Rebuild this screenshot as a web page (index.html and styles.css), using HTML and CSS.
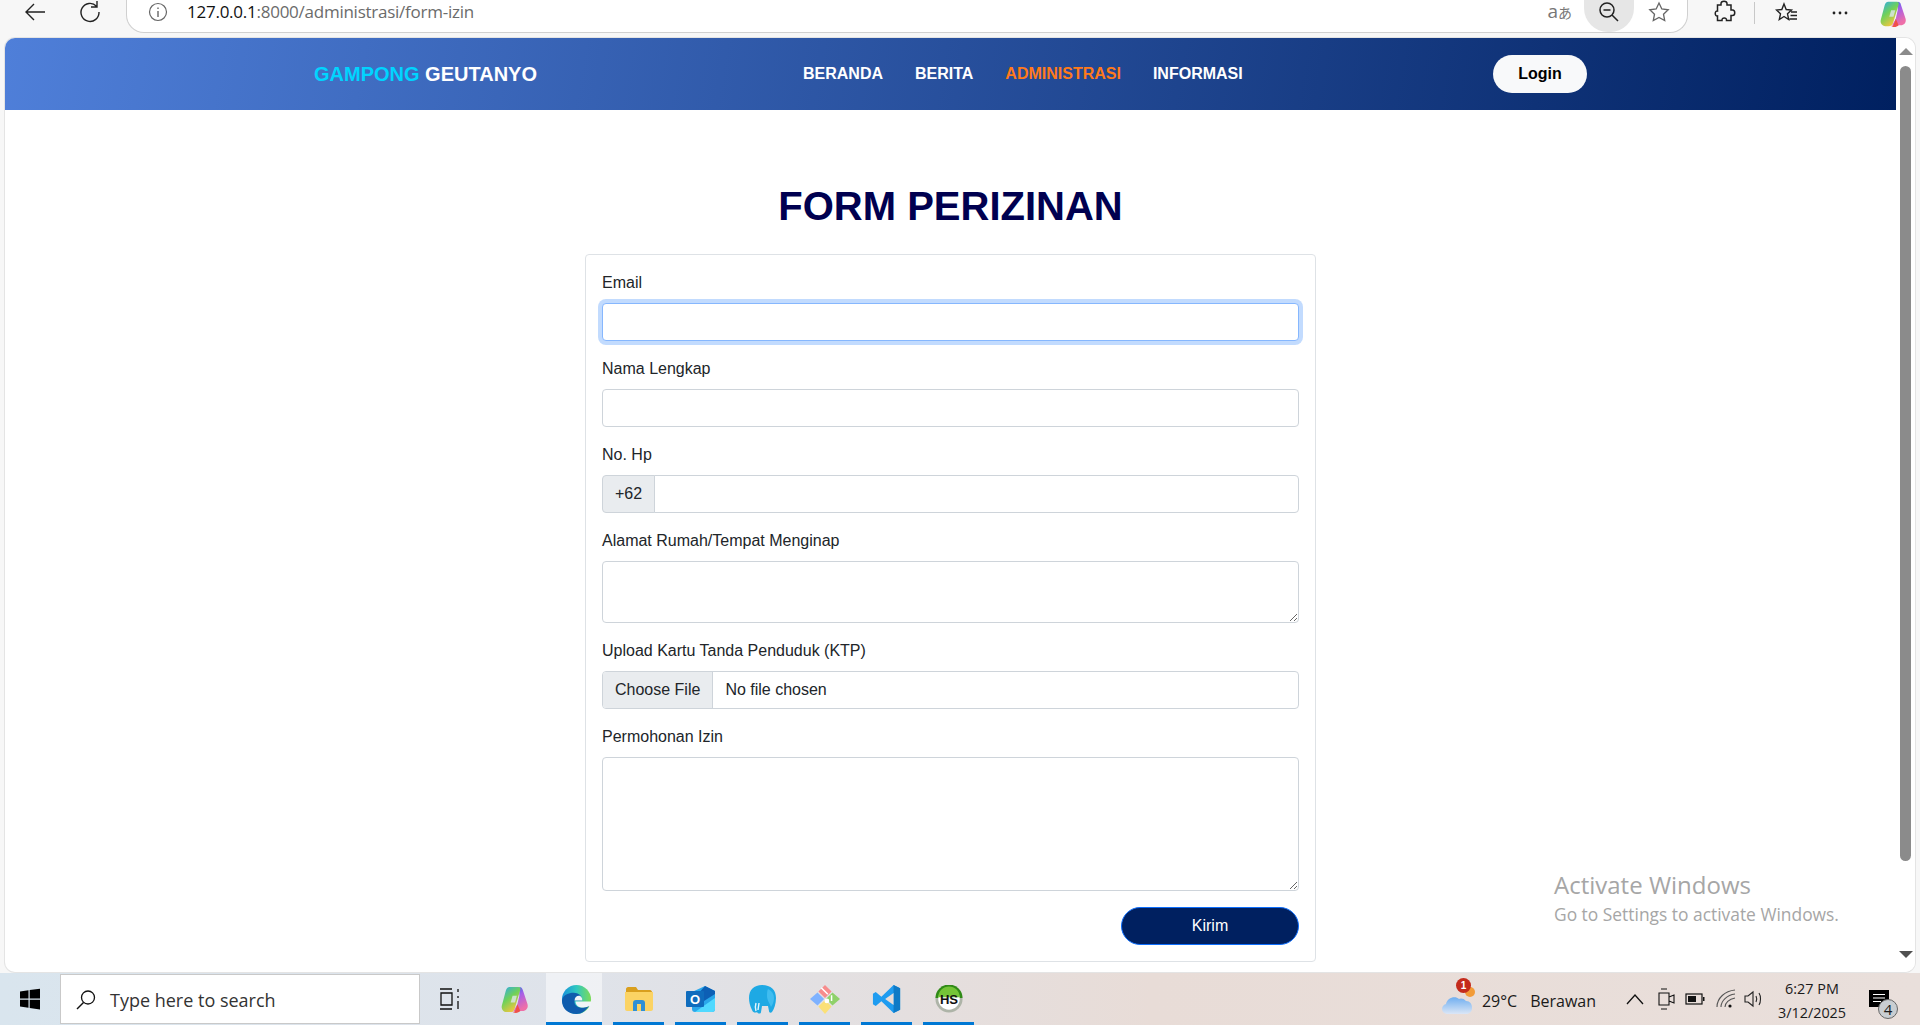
FILE: index.html
```html
<!DOCTYPE html>
<html lang="id">
<head>
<meta charset="utf-8">
<title>Form Perizinan</title>
<link rel="stylesheet" href="styles.css">
</head>
<body>
<svg class="defs" width="0" height="0" aria-hidden="true">
  <defs>
    <linearGradient id="cpa" x1="0" y1="0" x2=".6" y2="1"><stop offset="0" stop-color="#2aa8f0"/><stop offset=".5" stop-color="#6fd15a"/><stop offset="1" stop-color="#f7c63c"/></linearGradient>
    <linearGradient id="cpb" x1="0" y1="0" x2=".4" y2="1"><stop offset="0" stop-color="#2f6fe8"/><stop offset=".45" stop-color="#a85fe6"/><stop offset="1" stop-color="#ee6fa8"/></linearGradient>
    <symbol id="copilot-mark" viewBox="0 0 30 30">
      <path d="M20 2c2 0 3 1 3.500 3L28.500 20c1 4-1.500 7-5.500 7H14l4-7 2-9z" fill="url(#cpb)"/>
      <path d="M10 2h9c2 0 2.500 1.500 2 3L15 25c-.800 2-2.500 3-4.500 3H7c-4 0-6-3.500-5-7L6 6c.600-2.500 2-4 4-4z" fill="url(#cpa)"/>
      <path d="M12 27c1.500 1 3 1 4-1l2-6 3 7c-2 2-6 3-9 0z" fill="#f0504a"/>
      <path d="M13 11h4.500l-2 7H11z" fill="#dfeaf5" opacity=".75"/>
    </symbol>
  </defs>
</svg>
<div class="desktop">
  <header class="toolbar">
    <svg class="tb-back" width="24" height="24" viewBox="0 0 24 24"><path d="M22 12H3M11 4l-8 8 8 8" fill="none" stroke="#222" stroke-width="1.4"/></svg>
    <svg class="tb-reload" width="24" height="24" viewBox="0 0 24 24"><path d="M18.500 6.200A9 9 0 1 0 21 12M19 1v6h-6" fill="none" stroke="#222" stroke-width="1.4"/></svg>
    <div class="address">
      <svg width="20" height="20" viewBox="0 0 20 20"><circle cx="10" cy="10" r="8.500" fill="none" stroke="#666" stroke-width="1.200"/><path d="M10 9v6M10 5.500v1.600" stroke="#666" stroke-width="1.400"/></svg>
      <span class="url"><b>127.0.0.1</b>:8000/administrasi/form-izin</span>
      <span class="translate">a<span class="cjk">あ</span></span>
      <span class="zoom-btn"><svg width="22" height="22" viewBox="0 0 22 22"><circle cx="9" cy="9" r="7" fill="none" stroke="#222" stroke-width="1.500"/><path d="M5.500 9h7M14 14l6 6" stroke="#222" stroke-width="1.500"/></svg></span>
      <svg class="star" width="22" height="22" viewBox="0 0 22 22"><path d="M11 2l2.800 6 6.400.8-4.700 4.400 1.200 6.400-5.700-3.200-5.700 3.200 1.200-6.400L1.800 8.800l6.400-.8z" fill="none" stroke="#666" stroke-width="1.300"/></svg>
    </div>
    <svg class="ext" width="24" height="24" viewBox="0 0 24 24"><path d="M9 3.500c0-3 6-3 6 0v1.500h4v5h1.500c3 0 3 5.500 0 5.500H19v5h-4.500c.5-3.500-5-3.500-4.500 0H5.500v-4.500c-3 .5-3-5.500 0-5V5H9z" fill="none" stroke="#222" stroke-width="1.500"/></svg>
    <span class="tb-sep"></span>
    <svg class="fav" width="24" height="24" viewBox="0 0 24 24"><path d="M9 3l2.200 5.500 5.300.5-4 3.800 1.200 5.700L9 15.500 4.300 18.500l1.200-5.700-4-3.800 5.300-.5zM16 11h6M15.500 14.500h6.500M14.500 18h7.500" fill="none" stroke="#222" stroke-width="1.400"/></svg>
    <svg class="dots" width="16" height="4" viewBox="0 0 16 4"><circle cx="2" cy="2" r="1.400" fill="#222"/><circle cx="8" cy="2" r="1.400" fill="#222"/><circle cx="14" cy="2" r="1.400" fill="#222"/></svg>
    <svg class="copilot" width="28" height="28"><use href="#copilot-mark"/></svg>
  </header>

  <div class="viewport">
    <main class="page">
      <nav class="navbar">
        <div class="nav-inner">
          <a class="brand"><span class="brand-accent">GAMPONG</span> GEUTANYO</a>
          <ul class="nav-links">
            <li><a>BERANDA</a></li>
            <li><a>BERITA</a></li>
            <li><a class="active">ADMINISTRASI</a></li>
            <li><a>INFORMASI</a></li>
          </ul>
          <button class="login" type="button">Login</button>
        </div>
      </nav>
      <section class="content">
        <h1 class="title">FORM PERIZINAN</h1>
        <form class="card">
          <div class="field">
            <label class="label">Email</label>
            <input class="control is-focus" type="email">
          </div>
          <div class="field">
            <label class="label">Nama Lengkap</label>
            <input class="control" type="text">
          </div>
          <div class="field">
            <label class="label">No. Hp</label>
            <div class="group">
              <span class="group-text">+62</span>
              <input class="control group-input" type="text">
            </div>
          </div>
          <div class="field">
            <label class="label">Alamat Rumah/Tempat Menginap</label>
            <textarea class="control area-sm"></textarea>
          </div>
          <div class="field">
            <label class="label">Upload Kartu Tanda Penduduk (KTP)</label>
            <input class="control file" type="file">
          </div>
          <div class="field">
            <label class="label">Permohonan Izin</label>
            <textarea class="control area-lg"></textarea>
          </div>
          <div class="actions"><button class="submit" type="button">Kirim</button></div>
        </form>
      </section>
    </main>
    <aside class="scrollbar">
      <span class="arrow-up"></span>
      <span class="thumb"></span>
      <span class="arrow-down"></span>
    </aside>
    <div class="watermark">
      <div class="wm-title">Activate Windows</div>
      <div class="wm-sub">Go to Settings to activate Windows.</div>
    </div>
  </div>

  <footer class="taskbar">
    <span class="start"><svg width="22" height="22" viewBox="0 0 22 22"><path d="M1 3.500l8.500-1.200v8.200H1zM10.700 2.100L21 .7v9.800H10.700zM1 11.700h8.500v8.100L1 18.600zM10.700 11.700H21v9.700l-10.300-1.400z" fill="#000"/></svg></span>
    <div class="search">
      <svg width="22" height="22" viewBox="0 0 22 22"><circle cx="13" cy="8.500" r="6.500" fill="none" stroke="#111" stroke-width="1.300"/><path d="M8.500 13.500L2 20" stroke="#111" stroke-width="1.500"/></svg>
      <span>Type here to search</span>
    </div>
    <span class="task-icon taskview"><svg width="22" height="24" viewBox="0 0 22 24"><path d="M1 2h12M1 22h12M2 6h11v12H2zM19 2v3M19 9v2M19 14v8" fill="none" stroke="#111" stroke-width="1.300"/></svg></span>
    <span class="task-icon"><svg width="29" height="29"><use href="#copilot-mark"/></svg></span>
    <span class="task-icon is-active is-current"><svg width="31" height="31" viewBox="0 0 32 32"><defs><linearGradient id="ega" x1="0" y1=".5" x2="1" y2=".5"><stop offset="0" stop-color="#1790dc"/><stop offset=".5" stop-color="#2fc8c0"/><stop offset="1" stop-color="#7ddb58"/></linearGradient></defs><circle cx="16" cy="16" r="15" fill="url(#ega)"/><path d="M15 18h16v4c-2 1.500-5 2.500-8 2.500-5 0-8-3-8-6.500z" fill="#f0f4f8"/><path d="M1 17C2 11 8 9 13 9c5 0 9 3 9 8H14c-1 5 4 8 9 7.500 2 0 4-.5 6-2-3 5-8 8.500-13 8.500C7 31 1 25 1 17z" fill="#0f5cad"/><path d="M14 17c0-3 2-5 4.500-5s3.500 2.500 3.500 5z" fill="#f0f4f8"/></svg></span>
    <span class="task-icon is-active"><svg width="28" height="24" viewBox="0 0 28 24"><path d="M1 2c0-1 1-2 2-2h8l2 3h12c1 0 2 1 2 2v3H1z" fill="#d99f1e"/><path d="M0 5h28v17c0 1-1 2-2 2H2c-1 0-2-1-2-2z" fill="#fbd364"/><path d="M8 24v-8c0-2 1-3 3-3h6c2 0 3 1 3 3v8h-4v-7h-4v7z" fill="#2e90d6"/></svg></span>
    <span class="task-icon is-active"><svg width="30" height="27" viewBox="0 0 30 27"><path d="M6 6l13-6 10 5v18c0 2-1 3-3 3H9c-2 0-3-1-3-3z" fill="#2aa7ea"/><path d="M19 0l10 5v3l-11 7-7-6z" fill="#0d5fb5"/><path d="M9 26l20-14v11c0 2-1 3-3 3z" fill="#50d9ff"/><rect x="0" y="5" width="18" height="16" rx="1" fill="#0f6cbd"/><text class="ol-text" x="9" y="18" text-anchor="middle">O</text></svg></span>
    <span class="task-icon is-active"><svg width="29" height="30" viewBox="0 0 29 30"><path d="M14 1c9 0 14 5 14 13 0 6-2 11-4 14-1 1-3 1-3-1l-1-5h-6l-1 6c0 2-3 2-4 0-1 1-4 1-5-2-2-4-3-8-3-12C1 6 6 1 14 1z" fill="#1ea9e4"/><path d="M20 5c4 2 6 5 6 9 0 3-1 6-3 9-1-3-4-7-4-11 0-3 0-5 1-7z" fill="#40bdf0"/><path d="M8 19c-1 3-1 5 0 8M11 19l-1 7" stroke="#e4f5fc" stroke-width="1.400" fill="none"/></svg></span>
    <span class="task-icon is-active"><svg width="30" height="30" viewBox="0 0 32 32"><path d="M16 1l7 7-7 7-7-7z" fill="#f78c8c"/><path d="M8 9l7 7-7 7-8-7z" fill="#7fb2ff"/><path d="M24 9l8 7-8 7-7-7z" fill="#8fd16a"/><path d="M16 17l7 7-7 8-7-8z" fill="#fbe077"/><path d="M12 4l7 7M23 12v6" stroke="#fff" stroke-width="1.600"/><circle cx="18" cy="18" r="2.600" fill="#fff"/></svg></span>
    <span class="task-icon is-active"><svg width="30" height="30" viewBox="0 0 30 32"><path d="M22 1l7 3.500v23L22 31 9 18.500 3 23.500l-3-2V10.500l3-2 6 5z" fill="#1f9cf0"/><path d="M22 1l7 3.500v23L22 31z" fill="#0f7ac6"/><path d="M22 9.500L13 16l9 6.500z" fill="#e8dcd8"/></svg></span>
    <span class="task-icon is-active"><svg width="28" height="28" viewBox="0 0 30 30"><circle cx="15" cy="15" r="14.500" fill="#aeb4a8"/><path d="M.5 14a14.500 14.500 0 0 1 29 0z" fill="#2f8a16"/><circle cx="15" cy="15" r="11.500" fill="#fff"/><path d="M3.500 13a11.500 11.500 0 0 1 23 0z" fill="#74c437"/><text class="hs-text" x="15" y="20" text-anchor="middle">HS</text></svg></span>

    <div class="tray">
      <span class="weather-icon"><svg width="32" height="22" viewBox="0 0 32 22"><defs><linearGradient id="cl" x1="0" y1="0" x2="0" y2="1"><stop offset="0" stop-color="#6faef0"/><stop offset="1" stop-color="#dbe6f6"/></linearGradient></defs><path d="M7 21c-7 0-8-8-2-10 1-6 9-9 13-5 1-1 5-1 7 2 4 0 6 3 6 7 0 4-3 6-6 6z" fill="url(#cl)"/></svg><span class="w-sun"></span><span class="w-badge">1</span></span>
      <span class="temp">29°C</span>
      <span class="cond">Berawan</span>
      <svg class="t-up" width="18" height="12" viewBox="0 0 18 12"><path d="M1 11l8-9 8 9" fill="none" stroke="#111" stroke-width="1.300"/></svg>
      <svg class="t-cam" width="18" height="24" viewBox="0 0 18 24"><path d="M2 6h10v12H2zM12 10l5-2v8l-5-2M4 2h6M4 22h6" fill="none" stroke="#111" stroke-width="1.100"/></svg>
      <svg class="t-bat" width="20" height="14" viewBox="0 0 20 14"><rect x="1" y="2" width="16" height="10" fill="none" stroke="#111" stroke-width="1.200"/><rect x="3" y="4" width="8" height="6" fill="#111"/><rect x="18" y="5" width="1.500" height="4" fill="#111"/></svg>
      <svg class="t-wifi" width="20" height="20" viewBox="0 0 20 20"><path d="M1 18C1 9 9 2 19 1M5 18c0-6 6-12 14-13M9 18c0-4 4-8 10-9" fill="none" stroke="#555" stroke-width="1.100"/><circle cx="14" cy="17" r="1.600" fill="#111"/></svg>
      <svg class="t-vol" width="20" height="20" viewBox="0 0 20 20"><path d="M1 7h3l5-4v14l-5-4H1zM12 7c1 2 1 4 0 6M15 4c2 3 2 9 0 12" fill="none" stroke="#222" stroke-width="1.100"/></svg>
      <div class="clock"><span>6:27 PM</span><span>3/12/2025</span></div>
      <span class="notif"><svg width="20" height="17" viewBox="0 0 20 17"><path d="M0 0h20v17H0z" fill="#000"/><path d="M4 4.500h12M4 8h12M4 11.500h8" stroke="#fff" stroke-width="1.200"/></svg><span class="n-badge">4</span></span>
    </div>
  </footer>
</div>
</body>
</html>
```
FILE: styles.css
```css
* { box-sizing: border-box; }
html, body { margin: 0; height: 100%; overflow: hidden; }
body { font-family: "Liberation Sans", Arial, sans-serif; font-size: 16px; color: #212529; }
.defs { position: absolute; }

.desktop { width: 1920px; height: 1025px; display: flex; flex-direction: column; background: #f7f7f7; }

/* Browser chrome */
.toolbar { height: 38px; flex: none; display: flex; align-items: center; background: #f7f7f7; }
.tb-back { margin-left: 23px; margin-top: -14px; }
.tb-reload { margin-left: 31px; margin-top: -14px; }
.address { width: 1562px; height: 33px; margin-left: 24px; margin-top: -6px; padding: 0 0 8px 21px; background: #fff; border: 1px solid #d0d0d0; border-top: 0; border-radius: 0 0 18px 18px; display: flex; align-items: center; font-family: "Open Sans", sans-serif; }
.url { margin-left: 19px; font-size: 17px; letter-spacing: -.25px; color: #6b6b6b; flex: 1; }
.url b { font-weight: 400; color: #111; }
.translate { font-size: 19px; color: #777; margin-right: 12px; line-height: 19px; }
.cjk { font-family: "Noto Sans CJK JP", sans-serif; font-size: 14px; line-height: 14px; }
.zoom-btn { align-self: flex-start; width: 50px; height: 32px; margin-bottom: -8px; padding-bottom: 8px; background: #e6e6e6; border-radius: 0 0 24px 24px; display: flex; align-items: center; justify-content: center; }
.star { margin-left: 14px; margin-right: 17px; }
.ext { margin-left: 24px; margin-top: -14px; }
.tb-sep { width: 1px; height: 22px; margin-left: 18px; margin-top: -12px; background: #c8c8c8; }
.fav { margin-left: 20px; margin-top: -12px; }
.dots { margin-left: 33px; margin-top: -13px; }
.copilot { margin-left: 31px; margin-top: -10px; flex: none; }

/* Viewport */
.viewport { position: relative; height: 934px; margin: 0 5px; flex: none; display: flex; background: #fff; border-radius: 10px; overflow: hidden; box-shadow: 0 0 0 1px #e4e4e4; }
.page { flex: 1; min-width: 0; }
.scrollbar { width: 19px; flex: none; background: #fff; display: flex; flex-direction: column; align-items: center; padding-top: 10px; }
.arrow-up { width: 0; height: 0; border: 7px solid transparent; border-top: 0; border-bottom: 7px solid #8b8b8b; }
.thumb { width: 11px; height: 795px; margin-top: 11px; background: #8b8b8b; border-radius: 6px; }
.arrow-down { width: 0; height: 0; margin-top: 90px; border: 7px solid transparent; border-bottom: 0; border-top: 7px solid #505050; }

/* Navbar */
.navbar { height: 72px; background: linear-gradient(100deg, #4f7fd9 0%, #002060 100%); }
.nav-inner { width: 1273px; height: 100%; margin: 0 auto; display: flex; align-items: center; }
.brand { font-size: 20px; font-weight: 700; color: #fff; white-space: nowrap; }
.brand-accent { color: #00d4ff; }
.nav-links { list-style: none; margin: 0 0 0 258px; padding: 0; display: flex; gap: 16px; }
.nav-links a { display: block; padding: 8px; font-weight: 700; color: #fff; }
.nav-links a.active { color: #ff7a1a; }
.login { width: 94px; height: 38px; margin-left: auto; border: 0; border-radius: 19px; background: #f8f9fa; font: 700 16px "Liberation Sans", sans-serif; color: #000; }

/* Form */
.content { width: 731px; margin: 0 auto; padding-top: 72px; }
.title { margin: 0 0 24px; font-size: 40px; line-height: 48px; font-weight: 700; text-align: center; color: #000050; }
.card { border: 1px solid #dee2e6; border-radius: 4px; padding: 16px; background: #fff; }
.field { margin-bottom: 16px; }
.label { display: block; margin-bottom: 8px; line-height: 24px; }
.control { display: block; width: 100%; height: 38px; padding: 6px 12px; font: 16px/24px "Liberation Sans", sans-serif; color: #212529; background: #fff; border: 1px solid #ced4da; border-radius: 4px; outline: 0; }
.is-focus { border-color: #86b7fe; box-shadow: 0 0 0 4px rgba(13, 110, 253, .25); }
.group { display: flex; }
.group-text { width: 53px; height: 38px; padding: 6px 12px; line-height: 24px; background: #e9ecef; border: 1px solid #ced4da; border-radius: 4px 0 0 4px; text-align: center; }
.group-input { flex: 1; width: auto; margin-left: -1px; border-radius: 0 4px 4px 0; }
.area-sm { height: 62px; }
.area-lg { height: 134px; }
.file::file-selector-button { height: 36px; margin: -6px 12px -6px -12px; padding: 6px 12px; font: 16px "Liberation Sans", sans-serif; color: #212529; background: #e9ecef; border: 0; border-right: 1px solid #ced4da; border-radius: 0; }
.actions { display: flex; justify-content: flex-end; }
.submit { width: 178px; height: 38px; border: 1px solid #0d6efd; border-radius: 19px; background: #002060; color: #fff; font: 16px "Liberation Sans", sans-serif; }

/* Watermark */
.watermark { position: absolute; left: 1549px; top: 832px; font-family: "Open Sans", sans-serif; pointer-events: none; }
.wm-title { font-size: 24px; line-height: 30px; color: #a6a6a6; }
.wm-sub { font-size: 17.400px; line-height: 28px; color: #a6a6a6; }

/* Taskbar */
.taskbar { flex: 1; margin-top: 1px; display: flex; align-items: stretch; background: linear-gradient(90deg, #d9e5ee 0%, #dfe3ea 30%, #e8dcd7 60%, #e9dfdb 100%); font-family: "Open Sans", sans-serif; color: #1a1a1a; }
.start { width: 60px; display: flex; align-items: center; justify-content: center; }
.search { width: 360px; margin: 1px 0; padding: 1px 0 0 14px; display: flex; align-items: center; gap: 13px; background: #fff; border: 1px solid #c9c9c9; font-size: 18px; color: #333; }
.task-icon { width: 51px; margin-left: 11px; display: flex; align-items: center; justify-content: center; border-bottom: 3px solid transparent; padding-top: 3px; }
.taskview { margin-left: 7px; padding-right: 5px; }
.is-active { border-bottom-color: #0078d4; }
.is-current { width: 56px; margin-left: 6px; padding-left: 5px; background: rgba(255, 255, 255, .5); }
.ol-text { font: 700 13px "Liberation Sans", sans-serif; fill: #fff; }
.hs-text { font: 700 14px "Liberation Sans", sans-serif; fill: #111; }
.tray { margin-left: auto; display: flex; align-items: center; }
.weather-icon { position: relative; width: 34px; height: 32px; margin-right: 7px; display: flex; align-items: flex-end; }
.w-sun { position: absolute; left: 24px; top: 4px; width: 10px; height: 10px; border-radius: 50%; background: #f29b38; }
.w-badge { position: absolute; left: 15px; top: -5px; width: 15px; height: 15px; border-radius: 50%; background: #c42b1c; color: #fff; font: 700 10px/15px "Liberation Sans", sans-serif; text-align: center; }
.temp { font-size: 16px; padding-top: 3px; }
.cond { font-size: 16px; margin-left: 13px; padding-top: 3px; }
.t-up { margin-left: 30px; }
.t-cam { margin-left: 13px; }
.t-bat { margin-left: 10px; }
.t-wifi { margin-left: 11px; }
.t-vol { margin-left: 8px; }
.clock { width: 92px; margin-left: 2px; padding-top: 3px; display: flex; flex-direction: column; align-items: center; font-size: 14.400px; line-height: 24px; }
.notif { position: relative; width: 26px; height: 26px; margin: 0 26px 0 10px; padding: 4px 0 0 1px; }
.notif svg { display: block; }
.n-badge { position: absolute; right: -4px; bottom: -7px; width: 20px; height: 20px; border-radius: 50%; background: #c9ced2; border: 1px solid #666; font-size: 15px; line-height: 18px; text-align: center; }
```
